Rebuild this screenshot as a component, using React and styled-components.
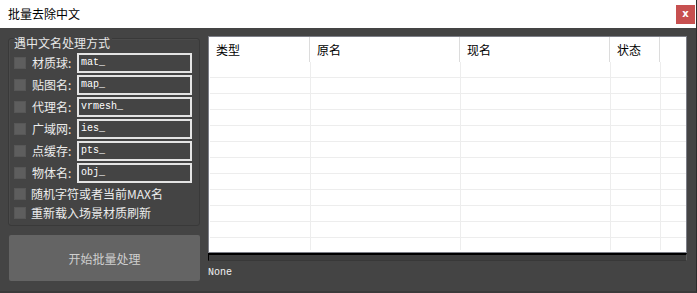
import React from "react";
import styled, { createGlobalStyle } from "styled-components";

const GlobalStyle = createGlobalStyle`
  html, body {
    margin: 0;
    padding: 0;
    background: #444444;
  }
  body {
    font-family: "Noto Sans CJK SC", "Noto Sans", sans-serif;
  }
`;

const rules = [
  { label: "材质球", value: "mat_" },
  { label: "贴图名", value: "map_" },
  { label: "代理名", value: "vrmesh_" },
  { label: "广域网", value: "ies_" },
  { label: "点缓存", value: "pts_" },
  { label: "物体名", value: "obj_" },
];

const extras = ["随机字符或者当前MAX名", "重新载入场景材质刷新"];

const columns = [
  { title: "类型", width: 101 },
  { title: "原名", width: 150 },
  { title: "现名", width: 150 },
  { title: "状态", width: 50 },
];

const App = () => {
  return (
    <>
      <GlobalStyle />
      <Window>
        <TitleBar>
          <Title>批量去除中文</Title>
          <CloseBtn>x</CloseBtn>
        </TitleBar>
        <Body>
          <LeftCol>
            <GroupBox>
              <GroupTitle>遇中文名处理方式</GroupTitle>
              {rules.map((r) => (
                <RuleRow key={r.label}>
                  <Check />
                  <Label>{r.label}:</Label>
                  <NameInput defaultValue={r.value} />
                </RuleRow>
              ))}
              {extras.map((t) => (
                <ExtraRow key={t}>
                  <Check />
                  <ExtraLabel>{t}</ExtraLabel>
                </ExtraRow>
              ))}
            </GroupBox>
            <RunBtn>开始批量处理</RunBtn>
          </LeftCol>
          <RightCol>
            <Table>
              <HeaderRow>
                {columns.map((c) => (
                  <HeadCell key={c.title} $w={c.width}>
                    {c.title}
                  </HeadCell>
                ))}
                <HeadFill />
              </HeaderRow>
              {Array.from({ length: 11 }).map((_, i) => (
                <Row key={i}>
                  {columns.map((c) => (
                    <Cell key={c.title} $w={c.width} />
                  ))}
                  <Cell />
                </Row>
              ))}
              <FillRow>
                {columns.map((c) => (
                  <Cell key={c.title} $w={c.width} />
                ))}
                <Cell />
              </FillRow>
            </Table>
            <ScrollTrack />
            <Status>None</Status>
          </RightCol>
        </Body>
      </Window>
    </>
  );
};

const Window = styled.div`
  width: 697px;
  height: 293px;
  display: flex;
  flex-direction: column;
  background: #444444;
  box-sizing: border-box;
  border-right: 1px solid #2c2c2c;
  border-bottom: 2px solid #3a3a3a;
  overflow: hidden;
`;

const TitleBar = styled.div`
  height: 28px;
  flex-shrink: 0;
  background: #ffffff;
  display: flex;
  align-items: center;
  justify-content: space-between;
  padding: 0 1px 0 8px;
`;

const Title = styled.div`
  font-size: 12px;
  color: #000;
  line-height: 14px;
`;

const CloseBtn = styled.div`
  width: 19px;
  height: 19px;
  background: #c75050;
  color: #fff;
  font-family: "DejaVu Sans", sans-serif;
  font-size: 10px;
  font-weight: bold;
  display: flex;
  align-items: center;
  justify-content: center;
  line-height: 1;
`;

const Body = styled.div`
  flex: 1;
  display: flex;
  gap: 8px;
  padding: 8px 9px 0 8px;
`;

const LeftCol = styled.div`
  width: 192px;
  display: flex;
  flex-direction: column;
`;

const GroupBox = styled.div`
  margin-top: 2px;
  border: 1px solid #393939;
  border-radius: 3px;
  box-shadow: inset 1px 1px 0 #4b4b4b;
  padding: 0 0 3px 5px;
  display: flex;
  flex-direction: column;
`;

const GroupTitle = styled.div`
  align-self: flex-start;
  margin: -3px 0 2px 0;
  padding: 0 2px 0 0;
  background: #444444;
  color: #e8e8e8;
  font-size: 12px;
  line-height: 14px;
`;

const RuleRow = styled.div`
  height: 22px;
  display: flex;
  align-items: center;
`;

const ExtraRow = styled.div`
  height: 19px;
  display: flex;
  align-items: center;
`;

const Check = styled.span`
  width: 12px;
  height: 12px;
  box-sizing: border-box;
  background: #5e5e5e;
  border: 1px solid #575757;
  flex-shrink: 0;
`;

const Label = styled.span`
  width: 45px;
  margin-left: 6px;
  color: #ececec;
  font-size: 12px;
  line-height: 14px;
  white-space: nowrap;
`;

const ExtraLabel = styled.span`
  margin-left: 5px;
  color: #ececec;
  font-size: 12px;
  line-height: 14px;
  white-space: nowrap;
`;

const NameInput = styled.input`
  width: 115px;
  height: 20px;
  box-sizing: border-box;
  margin: 0;
  padding: 0 2px 1px 2px;
  background: #444444;
  border: 2px solid #e4e4e4;
  outline: none;
  color: #ffffff;
  font-family: "Liberation Mono", "DejaVu Sans Mono", monospace;
  font-size: 10px;
  line-height: 15px;
`;

const RunBtn = styled.div`
  margin: 9px 0 0 1px;
  height: 46px;
  border-radius: 2px;
  background: #646464;
  color: #cfcfcf;
  font-size: 12px;
  display: flex;
  align-items: center;
  justify-content: center;
`;

const RightCol = styled.div`
  flex: 1;
  display: flex;
  flex-direction: column;
`;

const Table = styled.div`
  height: 217px;
  box-sizing: border-box;
  background: #ffffff;
  border: 1px solid #7d7f88;
  display: flex;
  flex-direction: column;
`;

const HeaderRow = styled.div`
  height: 25px;
  display: flex;
  flex-shrink: 0;
`;

const HeadCell = styled.div`
  width: ${(p) => p.$w}px;
  box-sizing: border-box;
  border-right: 1px solid #dcdcdc;
  padding-left: 7px;
  display: flex;
  align-items: center;
  font-size: 12px;
  color: #000;
`;

const HeadFill = styled.div`
  flex: 1;
`;

const Row = styled.div`
  height: 16px;
  display: flex;
  flex-shrink: 0;
  box-sizing: border-box;
  border-bottom: 1px solid #ededed;
  margin-left: 1px;
`;

const FillRow = styled.div`
  flex: 1;
  display: flex;
  margin: 0 0 2px 1px;
`;

const Cell = styled.div`
  box-sizing: border-box;
  ${(p) => (p.$w ? `width: ${p.$w}px;` : "flex: 1;")}
  ${(p) => (p.$w ? "border-right: 1px solid #ededed;" : "")}
`;

const ScrollTrack = styled.div`
  height: 8px;
  box-sizing: border-box;
  border-top: 2px solid #000;
  border-left: 1px solid #000;
  border-right: 1px solid #5a5a5a;
  border-bottom: 1px solid #383838;
  background: #3f3f3f;
`;

const Status = styled.div`
  margin-top: 5px;
  color: #f2f2f2;
  font-family: "Liberation Mono", "DejaVu Sans Mono", monospace;
  font-size: 10px;
  line-height: 13px;
`;

export default App;
